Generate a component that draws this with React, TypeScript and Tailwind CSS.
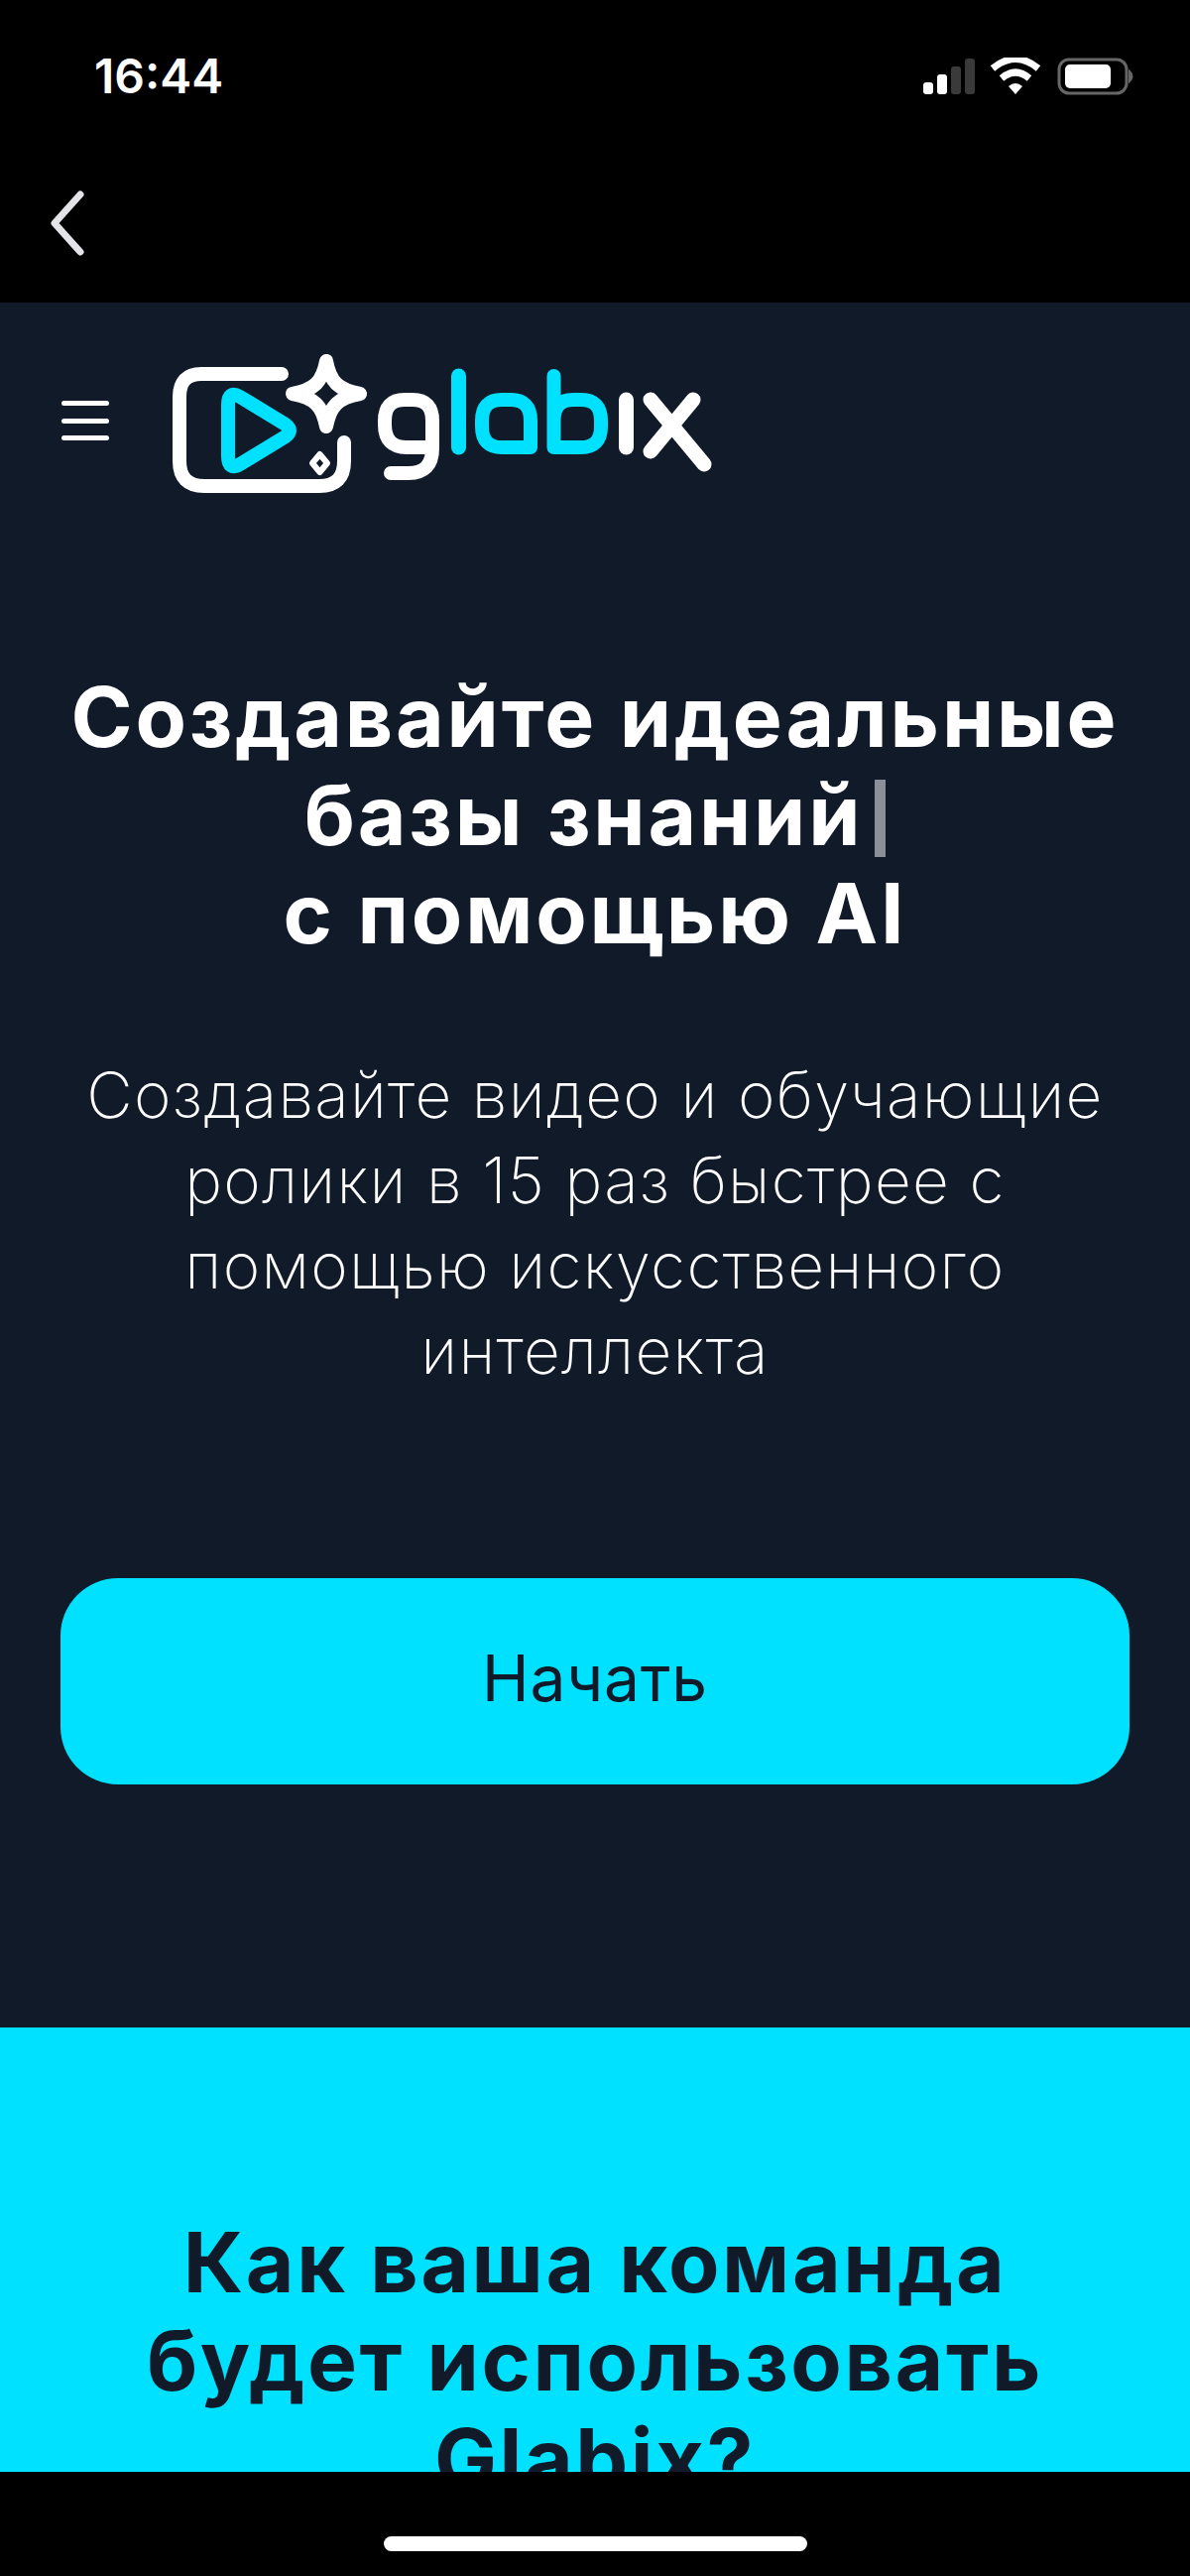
const sans = "font-['Inter','Noto_Sans',sans-serif]";

const StatusIcons = () => (
  <svg width="216" height="38" viewBox="0 0 216 38" className="block">
    <rect x="2" y="25" width="10" height="12" rx="3" fill="#fff" />
    <rect x="16" y="17" width="10" height="20" rx="3" fill="#fff" />
    <rect x="30" y="9" width="10" height="28" rx="3" fill="#3a3a3a" />
    <rect x="44" y="1" width="10" height="36" rx="3" fill="#3a3a3a" />
    <path d="M72 11 Q95 -8 118 11" fill="none" stroke="#fff" strokeWidth="7" />
    <path d="M81 21 Q95 9 109 21" fill="none" stroke="#fff" strokeWidth="7" />
    <path d="M88 29 Q95 23 102 29 L95 37 Z" fill="#fff" />
    <rect x="139" y="2" width="68" height="34" rx="10" fill="none" stroke="#666" strokeWidth="3" />
    <rect x="145" y="7" width="46" height="24" rx="5" fill="#fff" />
    <path d="M210 14 Q215 19 210 24 Z" fill="#666" stroke="#666" strokeWidth="2" />
  </svg>
);

const Logo = () => (
  <svg width="560" height="150" viewBox="170 352 560 150" className="block" fill="none" strokeLinecap="round" strokeLinejoin="round">
    <path d="M284 377 H203 Q181 377 181 400 V465 Q181 490 206 490 H322 Q347 490 347 465 V446" stroke="#fff" strokeWidth="14" />
    <path d="M230 408 Q230 393 242 400 L288 428 Q296 434 288 440 L242 468 Q230 475 230 460 Z" stroke="#00e0ff" strokeWidth="14" />
    <path d="M329 364 C333 385 341 393 363 397 C341 401 333 409 329 430 C325 409 317 401 295 397 C317 393 325 385 329 364 Z" stroke="#fff" strokeWidth="14" />
    <path d="M322.5 458 L330 467 L322.5 476 L315 467 Z" stroke="#fff" strokeWidth="6" />
    <path d="M436 451 H410 Q388 451 388 428 V424 Q388 403 408 403 H416 Q436 403 436 424 V452 Q436 477 412 477 H394" stroke="#fff" strokeWidth="14" />
    <path d="M462.5 379 V451" stroke="#00e0ff" strokeWidth="15" />
    <path d="M535 451 V424 Q535 403 515 403 H506 Q486 403 486 424 V430 Q486 451 506 451 H535" stroke="#00e0ff" strokeWidth="14" />
    <path d="M558.5 379 V451 H586 Q606 451 606 430 V424 Q606 403 586 403 H578 Q558.5 403 558.5 424" stroke="#00e0ff" strokeWidth="14" />
    <path d="M631.5 403 V451" stroke="#fff" strokeWidth="15" />
    <path d="M656 403 L710 468 M699 403 L656 455" stroke="#fff" strokeWidth="15" />
  </svg>
);

export default function App() {
  return (
    <div className={`w-[1200px] h-[2597px] flex flex-col bg-black overflow-hidden ${sans}`}>
      <div className="h-[305px] shrink-0 flex flex-col">
        <div className="flex items-center justify-between pl-[95px] pr-[55px] pt-[56px]">
          <span className="text-[48px] leading-[42px] font-semibold text-white">16:44</span>
          <StatusIcons />
        </div>
        <svg width="40" height="66" viewBox="0 0 40 66" className="block mt-[94px] ml-[48px]" fill="none">
          <path d="M33 4 L7 33 L33 62" stroke="#e4e4e8" strokeWidth="7" strokeLinecap="round" strokeLinejoin="round" />
        </svg>
      </div>

      <div className="flex-1 min-h-0 overflow-hidden">
        <div className="bg-[#101a29] h-[1739px] flex flex-col">
          <div className="flex items-center pl-[62px] pt-[47px]">
            <div className="flex flex-col gap-[12.5px] w-[48px] mb-[6px]">
              <div className="h-[5px] rounded-full bg-white" />
              <div className="h-[5px] rounded-full bg-white" />
              <div className="h-[5px] rounded-full bg-white" />
            </div>
            <div className="ml-[60px]">
              <Logo />
            </div>
          </div>

          <h1 className="mt-[171px] text-center text-white font-bold text-[84px] leading-[99px] tracking-[2.8px]">
            Создавайте идеальные
            <br />
            базы знаний<span className="inline-block ml-[12px] w-[11px] h-[78px] align-[-12px] bg-[#8a8f99]" />
            <br />с помощью AI
          </h1>

          <p className="mt-[91px] text-center text-white font-extralight text-[64px] leading-[86px] tracking-[1.3px]">
            Создавайте видео и обучающие
            <br />
            ролики в 15 раз быстрее с
            <br />
            помощью искусственного
            <br />
            интеллекта
          </p>

          <button className="mt-[186px] mx-[61px] h-[208px] rounded-[58px] pb-[6px] bg-[#00e0ff] text-[#101a29] text-[64px] font-normal tracking-[0.8px]">
            Начать
          </button>
        </div>

        <div className="bg-[#00e0ff] pt-[187px] text-center">
          <h2 className="text-[#101a29] font-bold text-[84px] leading-[99px] tracking-[2.6px]">
            Как ваша команда
            <br />
            будет использовать
            <br />
            Glabix?
          </h2>
        </div>
      </div>

      <div className="h-[105px] shrink-0 flex justify-center pt-[65px]">
        <div className="w-[427px] h-[15px] rounded-full bg-white" />
      </div>
    </div>
  );
}
